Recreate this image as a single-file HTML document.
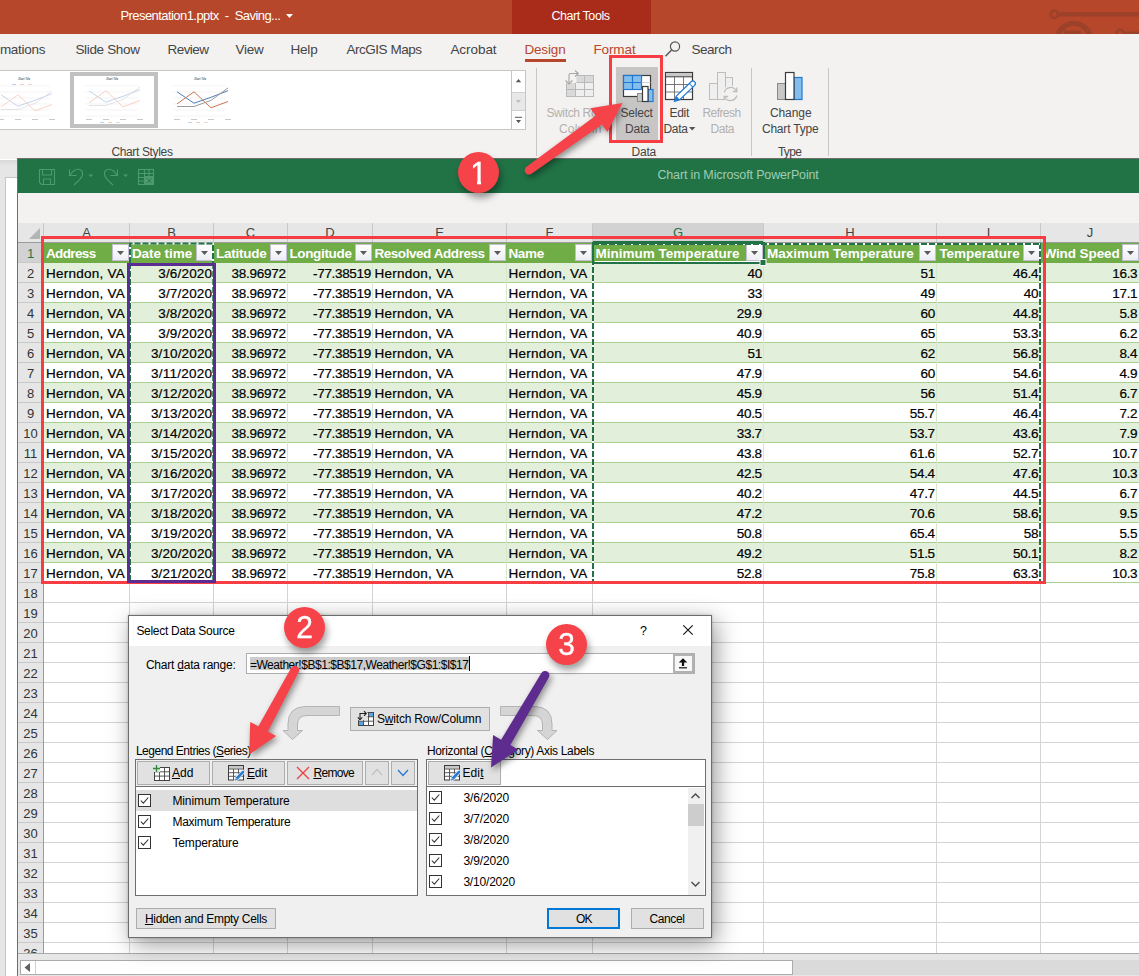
<!DOCTYPE html>
<html><head><meta charset="utf-8"><title>Select Data Source</title>
<style>
html,body{margin:0;padding:0;}
body{width:1139px;height:976px;overflow:hidden;position:relative;background:#fff;font-family:"Liberation Sans",sans-serif;}
.b{position:absolute;box-sizing:border-box;}
.t{position:absolute;white-space:pre;}
svg{position:absolute;overflow:visible;}
u{text-decoration:underline;text-underline-offset:1px;}
</style></head><body>
<div class="b" style="left:0px;top:0px;width:1139px;height:34px;background:#B7472A;"></div>
<div class="b" style="left:512px;top:0px;width:139px;height:34px;background:#A92B1A;"></div>
<div class="b" style="left:0px;top:34px;width:1139px;height:125px;background:#F3F2F1;"></div>
<div class="b" style="left:0px;top:160px;width:18px;height:816px;background:linear-gradient(#D9D9D9,#E6E6E6 6px);"></div>
<div class="b" style="left:5px;top:177px;width:13px;height:800px;background:#fff;border:1px solid #C6C6C6;border-right:none;"></div>
<div class="b" style="left:17px;top:158px;width:1122px;height:818px;background:#fff;border-left:1px solid #6E6E6E;border-top:1px solid #6E6E6E;"></div>
<div class="b" style="left:18px;top:159px;width:1121px;height:34px;background:#217346;"></div>
<div class="b" style="left:18px;top:193px;width:1121px;height:30px;background:#F3F2F1;"></div>
<div class="t" style="left:120.4px;top:6.0px;font-size:13px;line-height:20px;color:#fff;letter-spacing:-0.56px;">Presentation1.pptx  -  Saving...</div>
<svg style="left:286px;top:14px" width="7" height="4"><path d="M0 0 L7 0 L3.5 4 Z" fill="#fff"/></svg>
<div class="t" style="left:551.4px;top:6.0px;font-size:12.5px;line-height:20px;color:#fff;letter-spacing:-0.44px;">Chart Tools</div>
<svg style="left:1040px;top:0px;overflow:hidden" width="99" height="34" viewBox="0 0 99 34">
      <g fill="none" stroke="#9C412A">
        <circle cx="14.3" cy="14.4" r="3.6" stroke-width="2.6"/><path d="M19 14.4 H99" stroke-width="4.2"/>
        <circle cx="33.8" cy="39.9" r="16.5" stroke-width="5.4"/>
        <circle cx="80.2" cy="33.4" r="3.6" stroke-width="2.6"/><path d="M85 33.6 H99" stroke-width="4.2"/>
      </g><rect x="24" y="30.6" width="17" height="4" fill="#9C412A"/></svg>
<div class="t" style="left:-0.1px;top:39.7px;font-size:13.5px;line-height:20px;color:#444;letter-spacing:-0.30px;">mations</div>
<div class="t" style="left:75.4px;top:39.7px;font-size:13.5px;line-height:20px;color:#444;letter-spacing:-0.33px;">Slide Show</div>
<div class="t" style="left:167.4px;top:39.7px;font-size:13.5px;line-height:20px;color:#444;letter-spacing:-0.51px;">Review</div>
<div class="t" style="left:235.4px;top:39.7px;font-size:13.5px;line-height:20px;color:#444;letter-spacing:-0.20px;">View</div>
<div class="t" style="left:290.4px;top:39.7px;font-size:13.5px;line-height:20px;color:#444;letter-spacing:-0.14px;">Help</div>
<div class="t" style="left:346.4px;top:39.7px;font-size:13.5px;line-height:20px;color:#444;letter-spacing:-0.46px;">ArcGIS Maps</div>
<div class="t" style="left:450.4px;top:39.7px;font-size:13.5px;line-height:20px;color:#444;letter-spacing:-0.05px;">Acrobat</div>
<div class="t" style="left:691.4px;top:39.7px;font-size:13.5px;line-height:20px;color:#444;letter-spacing:-0.43px;">Search</div>
<div class="t" style="left:524.4px;top:39.7px;font-size:13.5px;line-height:20px;color:#B7472A;letter-spacing:-0.14px;">Design</div>
<div class="t" style="left:593.4px;top:39.7px;font-size:13.5px;line-height:20px;color:#B7472A;letter-spacing:-0.09px;">Format</div>
<div class="b" style="left:525px;top:59px;width:41px;height:3px;background:#B7472A;"></div>
<svg style="left:664px;top:40px" width="18" height="18" viewBox="0 0 18 18"><circle cx="11" cy="6.5" r="4.6" fill="none" stroke="#555" stroke-width="1.2"/><path d="M7.6 10 L1.5 16.2" stroke="#555" stroke-width="1.4"/></svg>
<div class="b" style="left:-1px;top:70px;width:527px;height:60px;background:#fff;border:1px solid #C6C6C6;"></div>
<div class="b" style="left:511px;top:70px;width:15px;height:60px;background:#fff;border:1px solid #C6C6C6;"></div>
<div class="b" style="left:512px;top:92px;width:13px;height:19px;background:#E8E8E8;border-top:1px solid #D0D0D0;border-bottom:1px solid #D0D0D0;"></div>
<svg style="left:514px;top:77px" width="9" height="48" viewBox="0 0 9 48"><path d="M1.800 5.200 L7.200 5.200 L4.500 2 Z" fill="#555"/><path d="M1.800 23 L7 23 L4.400 26 Z" fill="#BDBDBD"/><path d="M1 40.300 H8" stroke="#555" stroke-width="1"/><path d="M2 43 L7 43 L4.500 46.300 Z" fill="#555"/></svg>
<div class="b" style="left:70px;top:72px;width:88px;height:56px;background:#fff;border:4px solid #C1C1C1;"></div>
<svg style="left:-12px;top:72px" width="70" height="56" viewBox="0 0 70 56"><path d="M9 14 H62" stroke="#EDEDED" stroke-width="0.6"/><path d="M9 20 H62" stroke="#EDEDED" stroke-width="0.6"/><path d="M9 26 H62" stroke="#EDEDED" stroke-width="0.6"/><path d="M9 32 H62" stroke="#EDEDED" stroke-width="0.6"/><path d="M9 38 H62" stroke="#EDEDED" stroke-width="0.6"/><path d="M9 44 H62" stroke="#EDEDED" stroke-width="0.6"/><text x="36" y="7.8" font-size="2.7" text-anchor="middle" fill="#111" font-family="Liberation Sans, sans-serif">Chart Title</text><g fill="none" stroke-width="0.8" stroke-linejoin="round" opacity="0.75" transform="translate(0,4)"><polyline points="13,18.8 30,30.2 47,24.3 64,17.7" stroke="#9DBBE0"/><polyline points="13,30.9 30,18.8 47,34.8 64,28.5" stroke="#F6B8A0"/><polyline points="13,33.5 30,33.5 47,27.4 64,14.9" stroke="#D4D4D4"/></g><path d="M10 47.5 H16" stroke="#BDBDBD" stroke-width="0.8"/><path d="M27 47.5 H33" stroke="#BDBDBD" stroke-width="0.8"/><path d="M44 47.5 H50" stroke="#BDBDBD" stroke-width="0.8"/><path d="M61 47.5 H67" stroke="#BDBDBD" stroke-width="0.8"/><g transform="translate(0,-38.0)"><path d="M24 50.5 H28" stroke="#9DBBE0" stroke-width="0.7"/><path d="M32 50.5 H36" stroke="#F2B9A0" stroke-width="0.7"/><path d="M40 50.5 H44" stroke="#CFCFCF" stroke-width="0.7"/></g></svg>
<svg style="left:76px;top:72px" width="70" height="56" viewBox="0 0 70 56"><path d="M9 14 H62" stroke="#EDEDED" stroke-width="0.6"/><path d="M9 20 H62" stroke="#EDEDED" stroke-width="0.6"/><path d="M9 26 H62" stroke="#EDEDED" stroke-width="0.6"/><path d="M9 32 H62" stroke="#EDEDED" stroke-width="0.6"/><path d="M9 38 H62" stroke="#EDEDED" stroke-width="0.6"/><path d="M9 44 H62" stroke="#EDEDED" stroke-width="0.6"/><text x="36" y="7.8" font-size="2.7" text-anchor="middle" fill="#111" font-family="Liberation Sans, sans-serif">Chart Title</text><g fill="none" stroke-width="0.8" stroke-linejoin="round" opacity="0.8" transform="translate(0,0)"><polyline points="13,18.8 30,30.2 47,24.3 64,17.7" stroke="#9DBBE0"/><polyline points="13,30.9 30,18.8 47,34.8 64,28.5" stroke="#F6B8A0"/><polyline points="13,33.5 30,33.5 47,27.4 64,14.9" stroke="#D4D4D4"/></g><path d="M10 47.5 H16" stroke="#BDBDBD" stroke-width="0.8"/><path d="M27 47.5 H33" stroke="#BDBDBD" stroke-width="0.8"/><path d="M44 47.5 H50" stroke="#BDBDBD" stroke-width="0.8"/><path d="M61 47.5 H67" stroke="#BDBDBD" stroke-width="0.8"/><g transform="translate(0,0.0)"><path d="M24 50.5 H28" stroke="#9DBBE0" stroke-width="0.7"/><path d="M32 50.5 H36" stroke="#F2B9A0" stroke-width="0.7"/><path d="M40 50.5 H44" stroke="#CFCFCF" stroke-width="0.7"/></g></svg>
<svg style="left:164px;top:72px" width="70" height="56" viewBox="0 0 70 56"><path d="M9 14 H62" stroke="#EDEDED" stroke-width="0.6"/><path d="M9 20 H62" stroke="#EDEDED" stroke-width="0.6"/><path d="M9 26 H62" stroke="#EDEDED" stroke-width="0.6"/><path d="M9 32 H62" stroke="#EDEDED" stroke-width="0.6"/><path d="M9 38 H62" stroke="#EDEDED" stroke-width="0.6"/><path d="M9 44 H62" stroke="#EDEDED" stroke-width="0.6"/><text x="36" y="7.8" font-size="2.7" text-anchor="middle" fill="#111" font-family="Liberation Sans, sans-serif">Chart Title</text><g fill="none" stroke-width="1.0" stroke-linejoin="round" opacity="1" transform="translate(0,1)"><polyline points="13,18.8 30,30.2 47,24.3 64,17.7" stroke="#4F7FBF"/><polyline points="13,30.9 30,18.8 47,34.8 64,28.5" stroke="#C9764E"/><polyline points="13,33.5 30,33.5 47,27.4 64,14.9" stroke="#9A9A9A"/></g><path d="M10 47.5 H16" stroke="#BDBDBD" stroke-width="0.8"/><path d="M27 47.5 H33" stroke="#BDBDBD" stroke-width="0.8"/><path d="M44 47.5 H50" stroke="#BDBDBD" stroke-width="0.8"/><path d="M61 47.5 H67" stroke="#BDBDBD" stroke-width="0.8"/><g transform="translate(0,0.0)"><path d="M24 50.5 H28" stroke="#9DBBE0" stroke-width="0.7"/><path d="M32 50.5 H36" stroke="#F2B9A0" stroke-width="0.7"/><path d="M40 50.5 H44" stroke="#CFCFCF" stroke-width="0.7"/></g></svg>
<div class="t" style="left:111.4px;top:142.0px;font-size:12px;line-height:20px;color:#444;letter-spacing:-0.35px;">Chart Styles</div>
<div class="b" style="left:536px;top:68px;width:1px;height:88px;background:#C8C6C4;"></div>
<div class="b" style="left:751px;top:68px;width:1px;height:88px;background:#C8C6C4;"></div>
<div class="b" style="left:828px;top:68px;width:1px;height:88px;background:#C8C6C4;"></div>
<svg style="left:562px;top:70px" width="34" height="30" viewBox="0 0 34 30">
      <g stroke="#B9B9B9" stroke-width="1" fill="none">
      <rect x="4.5" y="5.5" width="27" height="21" fill="#EFEFEF"/>
      <rect x="13.5" y="5.5" width="18" height="7" fill="#D9D9D9"/><rect x="4.5" y="12.5" width="9" height="14" fill="#D9D9D9"/>
      <path d="M13.5 5.5 V26.5 M22.5 5.5 V26.5 M4.5 12.5 H31.5 M4.5 19.5 H31.5"/>
      </g>
      <rect x="2" y="1" width="12.5" height="12" fill="#F3F2F1"/>
      <g stroke="#A6A6A6" stroke-width="1.1" fill="none"><path d="M7 14 V5 Q7 3.5 8.5 3.5 H16"/><path d="M3.6 10.5 L7 14 L10.4 10.5"/><path d="M13 0.5 L16.4 3.5 L13 6.5"/></g></svg>
<div class="t" style="left:546.4px;top:103.0px;font-size:12px;line-height:20px;color:#B3B0AD;letter-spacing:-0.35px;">Switch Row/</div>
<div class="t" style="left:558.9px;top:118.5px;font-size:12px;line-height:20px;color:#B3B0AD;letter-spacing:0.22px;">Column</div>
<div class="b" style="left:616px;top:67px;width:42px;height:73px;background:#C8C6C4;"></div>
<svg style="left:620px;top:72px" width="36" height="32" viewBox="0 0 36 32">
      <rect x="3.5" y="3.5" width="27" height="21" fill="#fff" stroke="#3B3B3B" stroke-width="1.2"/>
      <rect x="3.5" y="3.5" width="18" height="14" fill="#83BEEC" stroke="#1E78D2" stroke-width="1.2"/>
      <path d="M12.5 3.5 V17.5 M3.5 10.5 H21.5" stroke="#1E78D2" stroke-width="1.2"/>
      <path d="M21.5 10.5 H30.5 M21.5 17.5 H30.5" stroke="#C8C8C8" stroke-width="0.8"/>
      <rect x="17.5" y="21.5" width="5.5" height="8" fill="#C8C8C8" stroke="#8A8A8A" stroke-width="1"/>
      <rect x="28" y="17.5" width="5" height="12" fill="#83BEEC" stroke="#1E78D2" stroke-width="1.2"/>
      <rect x="22.5" y="14.5" width="5.5" height="15" fill="#fff" stroke="#3B3B3B" stroke-width="1.2"/>
      </svg>
<div class="t" style="left:620.4px;top:103.0px;font-size:12px;line-height:20px;color:#444;letter-spacing:-0.19px;">Select</div>
<div class="t" style="left:624.9px;top:118.5px;font-size:12px;line-height:20px;color:#444;letter-spacing:-0.16px;">Data</div>
<svg style="left:662px;top:69px" width="38" height="36" viewBox="0 0 38 36">
      <rect x="3.5" y="3.5" width="27" height="27" fill="#fff" stroke="#3B3B3B" stroke-width="1.2"/>
      <rect x="4" y="4" width="26" height="3.6" fill="#C8C8C8"/>
      <path d="M3.5 7.8 H30.5" stroke="#3B3B3B" stroke-width="1"/>
      <path d="M12.5 8 V30 M21.5 8 V30 M4 15.5 H30 M4 23 H30" stroke="#6A6A6A" stroke-width="0.9"/>
      <g transform="translate(12.5,32.3) rotate(-44)"><path d="M0 0 L5 -2.500 H25.500 Q28 -2.500 28 0 Q28 2.500 25.500 2.500 H5 Z" fill="#fff" stroke="#1E78D2" stroke-width="1.200"/><path d="M0 0 L5 -2.500 V2.500 Z" fill="#1E78D2"/><path d="M23 -2.500 V2.500" stroke="#1E78D2" stroke-width="1"/></g>
      </svg>
<div class="t" style="left:669.4px;top:103.0px;font-size:12px;line-height:20px;color:#444;letter-spacing:-0.24px;">Edit</div>
<div class="t" style="left:663.4px;top:118.5px;font-size:12px;line-height:20px;color:#444;letter-spacing:-0.29px;">Data</div>
<svg style="left:689px;top:127px" width="7" height="4"><path d="M0 0 L6.4 0 L3.2 3.6 Z" fill="#555"/></svg>
<svg style="left:706px;top:69px" width="32" height="36" viewBox="0 0 32 36">
      <g fill="#EFEFEF" stroke="#BDBDBD" stroke-width="1">
      <rect x="19.5" y="8.5" width="7" height="14"/><rect x="3.5" y="14.5" width="8" height="16"/><rect x="11.5" y="3.5" width="8" height="27"/></g>
      <circle cx="24.5" cy="25" r="8.6" fill="#F3F2F1"/>
      <g fill="none" stroke="#BDBDBD" stroke-width="1.3"><path d="M18.2 23.5 A6.5 6.5 0 0 1 30.3 22"/><path d="M30.8 26.5 A6.5 6.5 0 0 1 18.7 28"/><path d="M30.8 18.5 V22.5 H26.8"/><path d="M18.2 31.5 V27.5 H22.2"/></g></svg>
<div class="t" style="left:702.4px;top:103.0px;font-size:12px;line-height:20px;color:#B3B0AD;letter-spacing:-0.55px;">Refresh</div>
<div class="t" style="left:710.4px;top:118.5px;font-size:12px;line-height:20px;color:#B3B0AD;letter-spacing:-0.41px;">Data</div>
<div class="t" style="left:631.4px;top:142.0px;font-size:12px;line-height:20px;color:#444;letter-spacing:-0.16px;">Data</div>
<svg style="left:774px;top:69px" width="32" height="34" viewBox="0 0 32 34">
      <rect x="3.5" y="14.5" width="8.5" height="16" fill="#C8C8C8" stroke="#8A8A8A" stroke-width="1"/>
      <rect x="20" y="8.5" width="8" height="22" fill="#83BEEC" stroke="#1E78D2" stroke-width="1.2"/>
      <rect x="11.5" y="3.5" width="8.5" height="27" fill="#fff" stroke="#3B3B3B" stroke-width="1.2"/></svg>
<div class="t" style="left:769.9px;top:103.0px;font-size:12px;line-height:20px;color:#444;letter-spacing:-0.06px;">Change</div>
<div class="t" style="left:761.9px;top:118.5px;font-size:12px;line-height:20px;color:#444;letter-spacing:-0.18px;">Chart Type</div>
<div class="t" style="left:777.9px;top:142.0px;font-size:12px;line-height:20px;color:#444;letter-spacing:-0.70px;">Type</div>
<div class="b" style="left:609px;top:55px;width:54px;height:88px;border:3px solid #F63D44;"></div>
<div class="t" style="left:657.4px;top:165.0px;font-size:12.5px;line-height:20px;color:#9FCDB3;letter-spacing:-0.14px;">Chart in Microsoft PowerPoint</div>
<svg style="left:0;top:0" width="200" height="200" viewBox="0 0 200 200">
      <g fill="none" stroke="#4E9A70" stroke-width="1.1">
      <path d="M39.5 169.5 H54.5 V184.5 H41.5 L39.5 182.5 Z"/><path d="M42.5 169.5 V175 H51.5 V169.5"/><path d="M43.5 184.5 V179 H50.5 V184.5"/>
      <path d="M69.5 169.5 V175.5 H76.5"/><path d="M69.8 175.3 Q74 169 78.5 169.3 Q83 170 82.6 174.6 Q82 178 74 185"/>
      <path d="M117.5 169.5 V175.5 H110.5"/><path d="M117.2 175.3 Q113 169 108.5 169.3 Q104 170 104.4 174.6 Q105 178 113 185"/>
      <rect x="138.5" y="169.500" width="15" height="15"/><path d="M138.500 173.500 H153.500 M138.500 177.500 H144.500 M138.500 181 H144.500 M144.500 169.500 V184.500 M149 169.500 V176"/>
      </g>
      <path d="M88.400 174.400 L93.200 174.400 L90.800 176.900 Z" fill="#4E9A70"/><path d="M123.200 174.400 L128 174.400 L125.600 176.900 Z" fill="#4E9A70"/>
      <rect x="144.500" y="176" width="9.500" height="9" fill="#4E9A70"/><path d="M147 178.300 L151.500 183 M151.500 178.300 L147 183" stroke="#217346" stroke-width="0.900"/>
      </svg>
<div class="b" style="left:18px;top:223px;width:1121px;height:20px;background:#E6E6E6;border-bottom:1px solid #9B9B9B;"></div>
<div class="b" style="left:18px;top:243px;width:26px;height:710px;background:#E6E6E6;border-right:1px solid #9B9B9B;"></div>
<div class="b" style="left:593px;top:223px;width:171px;height:20px;background:#D2D2D2;border-bottom:2px solid #217346;"></div>
<div class="b" style="left:18px;top:243px;width:25px;height:20px;background:#D2D2D2;"></div>
<svg style="left:18px;top:223px" width="26" height="20"><path d="M22 5 L22 16 L11 16 Z" fill="#B4B4B4"/></svg>
<div class="t" style="left:82.2px;top:222.5px;font-size:13px;line-height:20px;color:#444;letter-spacing:-0.00px;">A</div>
<div class="t" style="left:167.2px;top:222.5px;font-size:13px;line-height:20px;color:#444;letter-spacing:0.00px;">B</div>
<div class="t" style="left:245.8px;top:222.5px;font-size:13px;line-height:20px;color:#444;letter-spacing:0.00px;">C</div>
<div class="t" style="left:325.3px;top:222.5px;font-size:13px;line-height:20px;color:#444;letter-spacing:0.00px;">D</div>
<div class="t" style="left:435.2px;top:222.5px;font-size:13px;line-height:20px;color:#444;letter-spacing:0.00px;">E</div>
<div class="t" style="left:545.5px;top:222.5px;font-size:13px;line-height:20px;color:#444;letter-spacing:0.00px;">F</div>
<div class="t" style="left:672.9px;top:222.5px;font-size:13px;line-height:20px;color:#217346;letter-spacing:-0.00px;">G</div>
<div class="t" style="left:845.3px;top:222.5px;font-size:13px;line-height:20px;color:#444;letter-spacing:0.00px;">H</div>
<div class="t" style="left:986.7px;top:222.5px;font-size:13px;line-height:20px;color:#444;letter-spacing:-0.00px;">I</div>
<div class="t" style="left:1086.8px;top:222.5px;font-size:13px;line-height:20px;color:#444;letter-spacing:0.00px;">J</div>
<div class="b" style="left:43px;top:223px;width:1px;height:19px;background:#C8C8C8;"></div>
<div class="b" style="left:129px;top:223px;width:1px;height:19px;background:#C8C8C8;"></div>
<div class="b" style="left:213px;top:223px;width:1px;height:19px;background:#C8C8C8;"></div>
<div class="b" style="left:287px;top:223px;width:1px;height:19px;background:#C8C8C8;"></div>
<div class="b" style="left:372px;top:223px;width:1px;height:19px;background:#C8C8C8;"></div>
<div class="b" style="left:506px;top:223px;width:1px;height:19px;background:#C8C8C8;"></div>
<div class="b" style="left:592px;top:223px;width:1px;height:19px;background:#C8C8C8;"></div>
<div class="b" style="left:763px;top:223px;width:1px;height:19px;background:#C8C8C8;"></div>
<div class="b" style="left:936px;top:223px;width:1px;height:19px;background:#C8C8C8;"></div>
<div class="b" style="left:1040px;top:223px;width:1px;height:19px;background:#C8C8C8;"></div>
<div class="b" style="left:44px;top:243px;width:1095px;height:20px;background:#70AD47;"></div>
<div class="b" style="left:44px;top:263px;width:1095px;height:20px;background:#E2EFDA;border-bottom:1px solid #A9D08E;"></div>
<div class="b" style="left:44px;top:283px;width:1095px;height:20px;background:#fff;border-bottom:1px solid #A9D08E;"></div>
<div class="b" style="left:44px;top:303px;width:1095px;height:20px;background:#E2EFDA;border-bottom:1px solid #A9D08E;"></div>
<div class="b" style="left:44px;top:323px;width:1095px;height:20px;background:#fff;border-bottom:1px solid #A9D08E;"></div>
<div class="b" style="left:44px;top:343px;width:1095px;height:20px;background:#E2EFDA;border-bottom:1px solid #A9D08E;"></div>
<div class="b" style="left:44px;top:363px;width:1095px;height:20px;background:#fff;border-bottom:1px solid #A9D08E;"></div>
<div class="b" style="left:44px;top:383px;width:1095px;height:20px;background:#E2EFDA;border-bottom:1px solid #A9D08E;"></div>
<div class="b" style="left:44px;top:403px;width:1095px;height:20px;background:#fff;border-bottom:1px solid #A9D08E;"></div>
<div class="b" style="left:44px;top:423px;width:1095px;height:20px;background:#E2EFDA;border-bottom:1px solid #A9D08E;"></div>
<div class="b" style="left:44px;top:443px;width:1095px;height:20px;background:#fff;border-bottom:1px solid #A9D08E;"></div>
<div class="b" style="left:44px;top:463px;width:1095px;height:20px;background:#E2EFDA;border-bottom:1px solid #A9D08E;"></div>
<div class="b" style="left:44px;top:483px;width:1095px;height:20px;background:#fff;border-bottom:1px solid #A9D08E;"></div>
<div class="b" style="left:44px;top:503px;width:1095px;height:20px;background:#E2EFDA;border-bottom:1px solid #A9D08E;"></div>
<div class="b" style="left:44px;top:523px;width:1095px;height:20px;background:#fff;border-bottom:1px solid #A9D08E;"></div>
<div class="b" style="left:44px;top:543px;width:1095px;height:20px;background:#E2EFDA;border-bottom:1px solid #A9D08E;"></div>
<div class="b" style="left:44px;top:563px;width:1095px;height:20px;background:#fff;border-bottom:1px solid #A9D08E;"></div>
<div class="b" style="left:44px;top:602px;width:1095px;height:1px;background:#D4D4D4;"></div>
<div class="b" style="left:44px;top:622px;width:1095px;height:1px;background:#D4D4D4;"></div>
<div class="b" style="left:44px;top:642px;width:1095px;height:1px;background:#D4D4D4;"></div>
<div class="b" style="left:44px;top:662px;width:1095px;height:1px;background:#D4D4D4;"></div>
<div class="b" style="left:44px;top:682px;width:1095px;height:1px;background:#D4D4D4;"></div>
<div class="b" style="left:44px;top:702px;width:1095px;height:1px;background:#D4D4D4;"></div>
<div class="b" style="left:44px;top:722px;width:1095px;height:1px;background:#D4D4D4;"></div>
<div class="b" style="left:44px;top:742px;width:1095px;height:1px;background:#D4D4D4;"></div>
<div class="b" style="left:44px;top:762px;width:1095px;height:1px;background:#D4D4D4;"></div>
<div class="b" style="left:44px;top:782px;width:1095px;height:1px;background:#D4D4D4;"></div>
<div class="b" style="left:44px;top:802px;width:1095px;height:1px;background:#D4D4D4;"></div>
<div class="b" style="left:44px;top:822px;width:1095px;height:1px;background:#D4D4D4;"></div>
<div class="b" style="left:44px;top:842px;width:1095px;height:1px;background:#D4D4D4;"></div>
<div class="b" style="left:44px;top:862px;width:1095px;height:1px;background:#D4D4D4;"></div>
<div class="b" style="left:44px;top:882px;width:1095px;height:1px;background:#D4D4D4;"></div>
<div class="b" style="left:44px;top:902px;width:1095px;height:1px;background:#D4D4D4;"></div>
<div class="b" style="left:44px;top:922px;width:1095px;height:1px;background:#D4D4D4;"></div>
<div class="b" style="left:44px;top:942px;width:1095px;height:1px;background:#D4D4D4;"></div>
<div class="b" style="left:129px;top:583px;width:1px;height:370px;background:#D4D4D4;"></div>
<div class="b" style="left:213px;top:583px;width:1px;height:370px;background:#D4D4D4;"></div>
<div class="b" style="left:287px;top:583px;width:1px;height:370px;background:#D4D4D4;"></div>
<div class="b" style="left:372px;top:583px;width:1px;height:370px;background:#D4D4D4;"></div>
<div class="b" style="left:506px;top:583px;width:1px;height:370px;background:#D4D4D4;"></div>
<div class="b" style="left:592px;top:583px;width:1px;height:370px;background:#D4D4D4;"></div>
<div class="b" style="left:763px;top:583px;width:1px;height:370px;background:#D4D4D4;"></div>
<div class="b" style="left:936px;top:583px;width:1px;height:370px;background:#D4D4D4;"></div>
<div class="b" style="left:1040px;top:583px;width:1px;height:370px;background:#D4D4D4;"></div>
<div class="b" style="left:129px;top:263px;width:1px;height:320px;background:#D6E8CB;"></div>
<div class="b" style="left:213px;top:263px;width:1px;height:320px;background:#D6E8CB;"></div>
<div class="b" style="left:287px;top:263px;width:1px;height:320px;background:#D6E8CB;"></div>
<div class="b" style="left:372px;top:263px;width:1px;height:320px;background:#D6E8CB;"></div>
<div class="b" style="left:506px;top:263px;width:1px;height:320px;background:#D6E8CB;"></div>
<div class="b" style="left:592px;top:263px;width:1px;height:320px;background:#D6E8CB;"></div>
<div class="b" style="left:763px;top:263px;width:1px;height:320px;background:#D6E8CB;"></div>
<div class="b" style="left:936px;top:263px;width:1px;height:320px;background:#D6E8CB;"></div>
<div class="b" style="left:1040px;top:263px;width:1px;height:320px;background:#D6E8CB;"></div>
<div class="t" style="left:26.9px;top:243.5px;font-size:13px;line-height:20px;color:#217346;letter-spacing:-0.00px;">1</div>
<div class="b" style="left:18px;top:262px;width:25px;height:1px;background:#C8C8C8;"></div>
<div class="t" style="left:26.9px;top:263.5px;font-size:13px;line-height:20px;color:#333;letter-spacing:-0.00px;">2</div>
<div class="b" style="left:18px;top:282px;width:25px;height:1px;background:#C8C8C8;"></div>
<div class="t" style="left:26.9px;top:283.5px;font-size:13px;line-height:20px;color:#333;letter-spacing:-0.00px;">3</div>
<div class="b" style="left:18px;top:302px;width:25px;height:1px;background:#C8C8C8;"></div>
<div class="t" style="left:26.9px;top:303.5px;font-size:13px;line-height:20px;color:#333;letter-spacing:-0.00px;">4</div>
<div class="b" style="left:18px;top:322px;width:25px;height:1px;background:#C8C8C8;"></div>
<div class="t" style="left:26.9px;top:323.5px;font-size:13px;line-height:20px;color:#333;letter-spacing:-0.00px;">5</div>
<div class="b" style="left:18px;top:342px;width:25px;height:1px;background:#C8C8C8;"></div>
<div class="t" style="left:26.9px;top:343.5px;font-size:13px;line-height:20px;color:#333;letter-spacing:-0.00px;">6</div>
<div class="b" style="left:18px;top:362px;width:25px;height:1px;background:#C8C8C8;"></div>
<div class="t" style="left:26.9px;top:363.5px;font-size:13px;line-height:20px;color:#333;letter-spacing:-0.00px;">7</div>
<div class="b" style="left:18px;top:382px;width:25px;height:1px;background:#C8C8C8;"></div>
<div class="t" style="left:26.9px;top:383.5px;font-size:13px;line-height:20px;color:#333;letter-spacing:-0.00px;">8</div>
<div class="b" style="left:18px;top:402px;width:25px;height:1px;background:#C8C8C8;"></div>
<div class="t" style="left:26.9px;top:403.5px;font-size:13px;line-height:20px;color:#333;letter-spacing:-0.00px;">9</div>
<div class="b" style="left:18px;top:422px;width:25px;height:1px;background:#C8C8C8;"></div>
<div class="t" style="left:23.3px;top:423.5px;font-size:13px;line-height:20px;color:#333;letter-spacing:0.00px;">10</div>
<div class="b" style="left:18px;top:442px;width:25px;height:1px;background:#C8C8C8;"></div>
<div class="t" style="left:23.8px;top:443.5px;font-size:13px;line-height:20px;color:#333;letter-spacing:0.00px;">11</div>
<div class="b" style="left:18px;top:462px;width:25px;height:1px;background:#C8C8C8;"></div>
<div class="t" style="left:23.3px;top:463.5px;font-size:13px;line-height:20px;color:#333;letter-spacing:0.00px;">12</div>
<div class="b" style="left:18px;top:482px;width:25px;height:1px;background:#C8C8C8;"></div>
<div class="t" style="left:23.3px;top:483.5px;font-size:13px;line-height:20px;color:#333;letter-spacing:0.00px;">13</div>
<div class="b" style="left:18px;top:502px;width:25px;height:1px;background:#C8C8C8;"></div>
<div class="t" style="left:23.3px;top:503.5px;font-size:13px;line-height:20px;color:#333;letter-spacing:0.00px;">14</div>
<div class="b" style="left:18px;top:522px;width:25px;height:1px;background:#C8C8C8;"></div>
<div class="t" style="left:23.3px;top:523.5px;font-size:13px;line-height:20px;color:#333;letter-spacing:0.00px;">15</div>
<div class="b" style="left:18px;top:542px;width:25px;height:1px;background:#C8C8C8;"></div>
<div class="t" style="left:23.3px;top:543.5px;font-size:13px;line-height:20px;color:#333;letter-spacing:0.00px;">16</div>
<div class="b" style="left:18px;top:562px;width:25px;height:1px;background:#C8C8C8;"></div>
<div class="t" style="left:23.3px;top:563.5px;font-size:13px;line-height:20px;color:#333;letter-spacing:0.00px;">17</div>
<div class="b" style="left:18px;top:582px;width:25px;height:1px;background:#C8C8C8;"></div>
<div class="t" style="left:23.3px;top:583.5px;font-size:13px;line-height:20px;color:#333;letter-spacing:0.00px;">18</div>
<div class="b" style="left:18px;top:602px;width:25px;height:1px;background:#C8C8C8;"></div>
<div class="t" style="left:23.3px;top:603.5px;font-size:13px;line-height:20px;color:#333;letter-spacing:0.00px;">19</div>
<div class="b" style="left:18px;top:622px;width:25px;height:1px;background:#C8C8C8;"></div>
<div class="t" style="left:23.3px;top:623.5px;font-size:13px;line-height:20px;color:#333;letter-spacing:0.00px;">20</div>
<div class="b" style="left:18px;top:642px;width:25px;height:1px;background:#C8C8C8;"></div>
<div class="t" style="left:23.3px;top:643.5px;font-size:13px;line-height:20px;color:#333;letter-spacing:0.00px;">21</div>
<div class="b" style="left:18px;top:662px;width:25px;height:1px;background:#C8C8C8;"></div>
<div class="t" style="left:23.3px;top:663.5px;font-size:13px;line-height:20px;color:#333;letter-spacing:0.00px;">22</div>
<div class="b" style="left:18px;top:682px;width:25px;height:1px;background:#C8C8C8;"></div>
<div class="t" style="left:23.3px;top:683.5px;font-size:13px;line-height:20px;color:#333;letter-spacing:0.00px;">23</div>
<div class="b" style="left:18px;top:702px;width:25px;height:1px;background:#C8C8C8;"></div>
<div class="t" style="left:23.3px;top:703.5px;font-size:13px;line-height:20px;color:#333;letter-spacing:0.00px;">24</div>
<div class="b" style="left:18px;top:722px;width:25px;height:1px;background:#C8C8C8;"></div>
<div class="t" style="left:23.3px;top:723.5px;font-size:13px;line-height:20px;color:#333;letter-spacing:0.00px;">25</div>
<div class="b" style="left:18px;top:742px;width:25px;height:1px;background:#C8C8C8;"></div>
<div class="t" style="left:23.3px;top:743.5px;font-size:13px;line-height:20px;color:#333;letter-spacing:0.00px;">26</div>
<div class="b" style="left:18px;top:762px;width:25px;height:1px;background:#C8C8C8;"></div>
<div class="t" style="left:23.3px;top:763.5px;font-size:13px;line-height:20px;color:#333;letter-spacing:0.00px;">27</div>
<div class="b" style="left:18px;top:782px;width:25px;height:1px;background:#C8C8C8;"></div>
<div class="t" style="left:23.3px;top:783.5px;font-size:13px;line-height:20px;color:#333;letter-spacing:0.00px;">28</div>
<div class="b" style="left:18px;top:802px;width:25px;height:1px;background:#C8C8C8;"></div>
<div class="t" style="left:23.3px;top:803.5px;font-size:13px;line-height:20px;color:#333;letter-spacing:0.00px;">29</div>
<div class="b" style="left:18px;top:822px;width:25px;height:1px;background:#C8C8C8;"></div>
<div class="t" style="left:23.3px;top:823.5px;font-size:13px;line-height:20px;color:#333;letter-spacing:0.00px;">30</div>
<div class="b" style="left:18px;top:842px;width:25px;height:1px;background:#C8C8C8;"></div>
<div class="t" style="left:23.3px;top:843.5px;font-size:13px;line-height:20px;color:#333;letter-spacing:0.00px;">31</div>
<div class="b" style="left:18px;top:862px;width:25px;height:1px;background:#C8C8C8;"></div>
<div class="t" style="left:23.3px;top:863.5px;font-size:13px;line-height:20px;color:#333;letter-spacing:0.00px;">32</div>
<div class="b" style="left:18px;top:882px;width:25px;height:1px;background:#C8C8C8;"></div>
<div class="t" style="left:23.3px;top:883.5px;font-size:13px;line-height:20px;color:#333;letter-spacing:0.00px;">33</div>
<div class="b" style="left:18px;top:902px;width:25px;height:1px;background:#C8C8C8;"></div>
<div class="t" style="left:23.3px;top:903.5px;font-size:13px;line-height:20px;color:#333;letter-spacing:0.00px;">34</div>
<div class="b" style="left:18px;top:922px;width:25px;height:1px;background:#C8C8C8;"></div>
<div class="t" style="left:23.3px;top:923.5px;font-size:13px;line-height:20px;color:#333;letter-spacing:0.00px;">35</div>
<div class="b" style="left:18px;top:942px;width:25px;height:1px;background:#C8C8C8;"></div>
<div class="t" style="left:23.3px;top:943.5px;font-size:13px;line-height:20px;color:#333;letter-spacing:0.00px;">36</div>
<div class="b" style="left:18px;top:962px;width:25px;height:1px;background:#C8C8C8;"></div>
<div class="t" style="left:45.9px;top:243.5px;font-size:13.5px;line-height:20px;color:#fff;letter-spacing:-0.62px;font-weight:bold;">Address</div>
<div class="b" style="left:112px;top:244px;width:17px;height:17px;background:linear-gradient(#fff,#ECEEF4);border:1px solid #C2BDD2;"></div>
<svg style="left:117px;top:251px" width="7" height="4"><path d="M0 0 L7 0 L3.5 4 Z" fill="#5A5A5A"/></svg>
<div class="t" style="left:131.9px;top:243.5px;font-size:13.5px;line-height:20px;color:#fff;letter-spacing:-0.06px;font-weight:bold;">Date time</div>
<div class="b" style="left:196px;top:244px;width:17px;height:17px;background:linear-gradient(#fff,#ECEEF4);border:1px solid #C2BDD2;"></div>
<svg style="left:201px;top:251px" width="7" height="4"><path d="M0 0 L7 0 L3.5 4 Z" fill="#5A5A5A"/></svg>
<div class="t" style="left:215.9px;top:243.5px;font-size:13.5px;line-height:20px;color:#fff;letter-spacing:-0.22px;font-weight:bold;">Latitude</div>
<div class="b" style="left:270px;top:244px;width:17px;height:17px;background:linear-gradient(#fff,#ECEEF4);border:1px solid #C2BDD2;"></div>
<svg style="left:275px;top:251px" width="7" height="4"><path d="M0 0 L7 0 L3.5 4 Z" fill="#5A5A5A"/></svg>
<div class="t" style="left:289.4px;top:243.5px;font-size:13.5px;line-height:20px;color:#fff;letter-spacing:-0.34px;font-weight:bold;">Longitude</div>
<div class="b" style="left:355px;top:244px;width:17px;height:17px;background:linear-gradient(#fff,#ECEEF4);border:1px solid #C2BDD2;"></div>
<svg style="left:360px;top:251px" width="7" height="4"><path d="M0 0 L7 0 L3.5 4 Z" fill="#5A5A5A"/></svg>
<div class="t" style="left:374.4px;top:243.5px;font-size:13.5px;line-height:20px;color:#fff;letter-spacing:-0.44px;font-weight:bold;">Resolved Address</div>
<div class="b" style="left:489px;top:244px;width:17px;height:17px;background:linear-gradient(#fff,#ECEEF4);border:1px solid #C2BDD2;"></div>
<svg style="left:494px;top:251px" width="7" height="4"><path d="M0 0 L7 0 L3.5 4 Z" fill="#5A5A5A"/></svg>
<div class="t" style="left:508.4px;top:243.5px;font-size:13.5px;line-height:20px;color:#fff;letter-spacing:-0.27px;font-weight:bold;">Name</div>
<div class="b" style="left:575px;top:244px;width:17px;height:17px;background:linear-gradient(#fff,#ECEEF4);border:1px solid #C2BDD2;"></div>
<svg style="left:580px;top:251px" width="7" height="4"><path d="M0 0 L7 0 L3.5 4 Z" fill="#5A5A5A"/></svg>
<div class="t" style="left:595.4px;top:243.5px;font-size:13.5px;line-height:20px;color:#fff;letter-spacing:0.02px;font-weight:bold;">Minimum Temperature</div>
<div class="b" style="left:746px;top:244px;width:17px;height:17px;background:linear-gradient(#fff,#ECEEF4);border:1px solid #C2BDD2;"></div>
<svg style="left:751px;top:251px" width="7" height="4"><path d="M0 0 L7 0 L3.5 4 Z" fill="#5A5A5A"/></svg>
<div class="t" style="left:766.9px;top:243.5px;font-size:13.5px;line-height:20px;color:#fff;letter-spacing:-0.00px;font-weight:bold;">Maximum Temperature</div>
<div class="b" style="left:919px;top:244px;width:17px;height:17px;background:linear-gradient(#fff,#ECEEF4);border:1px solid #C2BDD2;"></div>
<svg style="left:924px;top:251px" width="7" height="4"><path d="M0 0 L7 0 L3.5 4 Z" fill="#5A5A5A"/></svg>
<div class="t" style="left:939.4px;top:243.5px;font-size:13.5px;line-height:20px;color:#fff;letter-spacing:-0.05px;font-weight:bold;">Temperature</div>
<div class="b" style="left:1023px;top:244px;width:17px;height:17px;background:linear-gradient(#fff,#ECEEF4);border:1px solid #C2BDD2;"></div>
<svg style="left:1028px;top:251px" width="7" height="4"><path d="M0 0 L7 0 L3.5 4 Z" fill="#5A5A5A"/></svg>
<div class="t" style="left:1043.4px;top:243.5px;font-size:13.5px;line-height:20px;color:#fff;letter-spacing:-0.09px;font-weight:bold;">Wind Speed</div>
<div class="b" style="left:1122px;top:244px;width:17px;height:17px;background:linear-gradient(#fff,#ECEEF4);border:1px solid #C2BDD2;"></div>
<svg style="left:1127px;top:251px" width="7" height="4"><path d="M0 0 L7 0 L3.5 4 Z" fill="#5A5A5A"/></svg>
<div class="t" style="left:46.0px;top:263.5px;font-size:13.5px;line-height:20px;color:#000;letter-spacing:0.25px;-webkit-text-stroke:0.2px #000;">Herndon, VA</div>
<div class="t" style="left:158.2px;top:263.5px;font-size:13.5px;line-height:20px;color:#000;letter-spacing:0.19px;-webkit-text-stroke:0.2px #000;">3/6/2020</div>
<div class="t" style="left:231.6px;top:263.5px;font-size:13.5px;line-height:20px;color:#000;letter-spacing:-0.27px;-webkit-text-stroke:0.2px #000;">38.96972</div>
<div class="t" style="left:313.1px;top:263.5px;font-size:13.5px;line-height:20px;color:#000;letter-spacing:-0.34px;-webkit-text-stroke:0.2px #000;">-77.38519</div>
<div class="t" style="left:374.5px;top:263.5px;font-size:13.5px;line-height:20px;color:#000;letter-spacing:0.25px;-webkit-text-stroke:0.2px #000;">Herndon, VA</div>
<div class="t" style="left:508.5px;top:263.5px;font-size:13.5px;line-height:20px;color:#000;letter-spacing:0.25px;-webkit-text-stroke:0.2px #000;">Herndon, VA</div>
<div class="t" style="left:747.5px;top:263.5px;font-size:13.5px;line-height:20px;color:#000;letter-spacing:-0.36px;-webkit-text-stroke:0.2px #000;">40</div>
<div class="t" style="left:920.5px;top:263.5px;font-size:13.5px;line-height:20px;color:#000;letter-spacing:-0.36px;-webkit-text-stroke:0.2px #000;">51</div>
<div class="t" style="left:1013.0px;top:263.5px;font-size:13.5px;line-height:20px;color:#000;letter-spacing:-0.28px;-webkit-text-stroke:0.2px #000;">46.4</div>
<div class="t" style="left:1112.2px;top:263.5px;font-size:13.5px;line-height:20px;color:#000;letter-spacing:-0.28px;-webkit-text-stroke:0.2px #000;">16.3</div>
<div class="t" style="left:46.0px;top:283.5px;font-size:13.5px;line-height:20px;color:#000;letter-spacing:0.25px;-webkit-text-stroke:0.2px #000;">Herndon, VA</div>
<div class="t" style="left:158.2px;top:283.5px;font-size:13.5px;line-height:20px;color:#000;letter-spacing:0.19px;-webkit-text-stroke:0.2px #000;">3/7/2020</div>
<div class="t" style="left:231.6px;top:283.5px;font-size:13.5px;line-height:20px;color:#000;letter-spacing:-0.27px;-webkit-text-stroke:0.2px #000;">38.96972</div>
<div class="t" style="left:313.1px;top:283.5px;font-size:13.5px;line-height:20px;color:#000;letter-spacing:-0.34px;-webkit-text-stroke:0.2px #000;">-77.38519</div>
<div class="t" style="left:374.5px;top:283.5px;font-size:13.5px;line-height:20px;color:#000;letter-spacing:0.25px;-webkit-text-stroke:0.2px #000;">Herndon, VA</div>
<div class="t" style="left:508.5px;top:283.5px;font-size:13.5px;line-height:20px;color:#000;letter-spacing:0.25px;-webkit-text-stroke:0.2px #000;">Herndon, VA</div>
<div class="t" style="left:747.5px;top:283.5px;font-size:13.5px;line-height:20px;color:#000;letter-spacing:-0.36px;-webkit-text-stroke:0.2px #000;">33</div>
<div class="t" style="left:920.5px;top:283.5px;font-size:13.5px;line-height:20px;color:#000;letter-spacing:-0.36px;-webkit-text-stroke:0.2px #000;">49</div>
<div class="t" style="left:1023.8px;top:283.5px;font-size:13.5px;line-height:20px;color:#000;letter-spacing:-0.36px;-webkit-text-stroke:0.2px #000;">40</div>
<div class="t" style="left:1112.2px;top:283.5px;font-size:13.5px;line-height:20px;color:#000;letter-spacing:-0.28px;-webkit-text-stroke:0.2px #000;">17.1</div>
<div class="t" style="left:46.0px;top:303.5px;font-size:13.5px;line-height:20px;color:#000;letter-spacing:0.25px;-webkit-text-stroke:0.2px #000;">Herndon, VA</div>
<div class="t" style="left:158.2px;top:303.5px;font-size:13.5px;line-height:20px;color:#000;letter-spacing:0.19px;-webkit-text-stroke:0.2px #000;">3/8/2020</div>
<div class="t" style="left:231.6px;top:303.5px;font-size:13.5px;line-height:20px;color:#000;letter-spacing:-0.27px;-webkit-text-stroke:0.2px #000;">38.96972</div>
<div class="t" style="left:313.1px;top:303.5px;font-size:13.5px;line-height:20px;color:#000;letter-spacing:-0.34px;-webkit-text-stroke:0.2px #000;">-77.38519</div>
<div class="t" style="left:374.5px;top:303.5px;font-size:13.5px;line-height:20px;color:#000;letter-spacing:0.25px;-webkit-text-stroke:0.2px #000;">Herndon, VA</div>
<div class="t" style="left:508.5px;top:303.5px;font-size:13.5px;line-height:20px;color:#000;letter-spacing:0.25px;-webkit-text-stroke:0.2px #000;">Herndon, VA</div>
<div class="t" style="left:736.7px;top:303.5px;font-size:13.5px;line-height:20px;color:#000;letter-spacing:-0.28px;-webkit-text-stroke:0.2px #000;">29.9</div>
<div class="t" style="left:920.5px;top:303.5px;font-size:13.5px;line-height:20px;color:#000;letter-spacing:-0.36px;-webkit-text-stroke:0.2px #000;">60</div>
<div class="t" style="left:1013.0px;top:303.5px;font-size:13.5px;line-height:20px;color:#000;letter-spacing:-0.28px;-webkit-text-stroke:0.2px #000;">44.8</div>
<div class="t" style="left:1119.4px;top:303.5px;font-size:13.5px;line-height:20px;color:#000;letter-spacing:-0.29px;-webkit-text-stroke:0.2px #000;">5.8</div>
<div class="t" style="left:46.0px;top:323.5px;font-size:13.5px;line-height:20px;color:#000;letter-spacing:0.25px;-webkit-text-stroke:0.2px #000;">Herndon, VA</div>
<div class="t" style="left:158.2px;top:323.5px;font-size:13.5px;line-height:20px;color:#000;letter-spacing:0.19px;-webkit-text-stroke:0.2px #000;">3/9/2020</div>
<div class="t" style="left:231.6px;top:323.5px;font-size:13.5px;line-height:20px;color:#000;letter-spacing:-0.27px;-webkit-text-stroke:0.2px #000;">38.96972</div>
<div class="t" style="left:313.1px;top:323.5px;font-size:13.5px;line-height:20px;color:#000;letter-spacing:-0.34px;-webkit-text-stroke:0.2px #000;">-77.38519</div>
<div class="t" style="left:374.5px;top:323.5px;font-size:13.5px;line-height:20px;color:#000;letter-spacing:0.25px;-webkit-text-stroke:0.2px #000;">Herndon, VA</div>
<div class="t" style="left:508.5px;top:323.5px;font-size:13.5px;line-height:20px;color:#000;letter-spacing:0.25px;-webkit-text-stroke:0.2px #000;">Herndon, VA</div>
<div class="t" style="left:736.7px;top:323.5px;font-size:13.5px;line-height:20px;color:#000;letter-spacing:-0.28px;-webkit-text-stroke:0.2px #000;">40.9</div>
<div class="t" style="left:920.5px;top:323.5px;font-size:13.5px;line-height:20px;color:#000;letter-spacing:-0.36px;-webkit-text-stroke:0.2px #000;">65</div>
<div class="t" style="left:1013.0px;top:323.5px;font-size:13.5px;line-height:20px;color:#000;letter-spacing:-0.28px;-webkit-text-stroke:0.2px #000;">53.3</div>
<div class="t" style="left:1119.4px;top:323.5px;font-size:13.5px;line-height:20px;color:#000;letter-spacing:-0.29px;-webkit-text-stroke:0.2px #000;">6.2</div>
<div class="t" style="left:46.0px;top:343.5px;font-size:13.5px;line-height:20px;color:#000;letter-spacing:0.25px;-webkit-text-stroke:0.2px #000;">Herndon, VA</div>
<div class="t" style="left:150.9px;top:343.5px;font-size:13.5px;line-height:20px;color:#000;letter-spacing:0.14px;-webkit-text-stroke:0.2px #000;">3/10/2020</div>
<div class="t" style="left:231.6px;top:343.5px;font-size:13.5px;line-height:20px;color:#000;letter-spacing:-0.27px;-webkit-text-stroke:0.2px #000;">38.96972</div>
<div class="t" style="left:313.1px;top:343.5px;font-size:13.5px;line-height:20px;color:#000;letter-spacing:-0.34px;-webkit-text-stroke:0.2px #000;">-77.38519</div>
<div class="t" style="left:374.5px;top:343.5px;font-size:13.5px;line-height:20px;color:#000;letter-spacing:0.25px;-webkit-text-stroke:0.2px #000;">Herndon, VA</div>
<div class="t" style="left:508.5px;top:343.5px;font-size:13.5px;line-height:20px;color:#000;letter-spacing:0.25px;-webkit-text-stroke:0.2px #000;">Herndon, VA</div>
<div class="t" style="left:747.5px;top:343.5px;font-size:13.5px;line-height:20px;color:#000;letter-spacing:-0.36px;-webkit-text-stroke:0.2px #000;">51</div>
<div class="t" style="left:920.5px;top:343.5px;font-size:13.5px;line-height:20px;color:#000;letter-spacing:-0.36px;-webkit-text-stroke:0.2px #000;">62</div>
<div class="t" style="left:1013.0px;top:343.5px;font-size:13.5px;line-height:20px;color:#000;letter-spacing:-0.28px;-webkit-text-stroke:0.2px #000;">56.8</div>
<div class="t" style="left:1119.4px;top:343.5px;font-size:13.5px;line-height:20px;color:#000;letter-spacing:-0.29px;-webkit-text-stroke:0.2px #000;">8.4</div>
<div class="t" style="left:46.0px;top:363.5px;font-size:13.5px;line-height:20px;color:#000;letter-spacing:0.25px;-webkit-text-stroke:0.2px #000;">Herndon, VA</div>
<div class="t" style="left:150.9px;top:363.5px;font-size:13.5px;line-height:20px;color:#000;letter-spacing:0.25px;-webkit-text-stroke:0.2px #000;">3/11/2020</div>
<div class="t" style="left:231.6px;top:363.5px;font-size:13.5px;line-height:20px;color:#000;letter-spacing:-0.27px;-webkit-text-stroke:0.2px #000;">38.96972</div>
<div class="t" style="left:313.1px;top:363.5px;font-size:13.5px;line-height:20px;color:#000;letter-spacing:-0.34px;-webkit-text-stroke:0.2px #000;">-77.38519</div>
<div class="t" style="left:374.5px;top:363.5px;font-size:13.5px;line-height:20px;color:#000;letter-spacing:0.25px;-webkit-text-stroke:0.2px #000;">Herndon, VA</div>
<div class="t" style="left:508.5px;top:363.5px;font-size:13.5px;line-height:20px;color:#000;letter-spacing:0.25px;-webkit-text-stroke:0.2px #000;">Herndon, VA</div>
<div class="t" style="left:736.7px;top:363.5px;font-size:13.5px;line-height:20px;color:#000;letter-spacing:-0.28px;-webkit-text-stroke:0.2px #000;">47.9</div>
<div class="t" style="left:920.5px;top:363.5px;font-size:13.5px;line-height:20px;color:#000;letter-spacing:-0.36px;-webkit-text-stroke:0.2px #000;">60</div>
<div class="t" style="left:1013.0px;top:363.5px;font-size:13.5px;line-height:20px;color:#000;letter-spacing:-0.28px;-webkit-text-stroke:0.2px #000;">54.6</div>
<div class="t" style="left:1119.4px;top:363.5px;font-size:13.5px;line-height:20px;color:#000;letter-spacing:-0.29px;-webkit-text-stroke:0.2px #000;">4.9</div>
<div class="t" style="left:46.0px;top:383.5px;font-size:13.5px;line-height:20px;color:#000;letter-spacing:0.25px;-webkit-text-stroke:0.2px #000;">Herndon, VA</div>
<div class="t" style="left:150.9px;top:383.5px;font-size:13.5px;line-height:20px;color:#000;letter-spacing:0.14px;-webkit-text-stroke:0.2px #000;">3/12/2020</div>
<div class="t" style="left:231.6px;top:383.5px;font-size:13.5px;line-height:20px;color:#000;letter-spacing:-0.27px;-webkit-text-stroke:0.2px #000;">38.96972</div>
<div class="t" style="left:313.1px;top:383.5px;font-size:13.5px;line-height:20px;color:#000;letter-spacing:-0.34px;-webkit-text-stroke:0.2px #000;">-77.38519</div>
<div class="t" style="left:374.5px;top:383.5px;font-size:13.5px;line-height:20px;color:#000;letter-spacing:0.25px;-webkit-text-stroke:0.2px #000;">Herndon, VA</div>
<div class="t" style="left:508.5px;top:383.5px;font-size:13.5px;line-height:20px;color:#000;letter-spacing:0.25px;-webkit-text-stroke:0.2px #000;">Herndon, VA</div>
<div class="t" style="left:736.7px;top:383.5px;font-size:13.5px;line-height:20px;color:#000;letter-spacing:-0.28px;-webkit-text-stroke:0.2px #000;">45.9</div>
<div class="t" style="left:920.5px;top:383.5px;font-size:13.5px;line-height:20px;color:#000;letter-spacing:-0.36px;-webkit-text-stroke:0.2px #000;">56</div>
<div class="t" style="left:1013.0px;top:383.5px;font-size:13.5px;line-height:20px;color:#000;letter-spacing:-0.28px;-webkit-text-stroke:0.2px #000;">51.4</div>
<div class="t" style="left:1119.4px;top:383.5px;font-size:13.5px;line-height:20px;color:#000;letter-spacing:-0.29px;-webkit-text-stroke:0.2px #000;">6.7</div>
<div class="t" style="left:46.0px;top:403.5px;font-size:13.5px;line-height:20px;color:#000;letter-spacing:0.25px;-webkit-text-stroke:0.2px #000;">Herndon, VA</div>
<div class="t" style="left:150.9px;top:403.5px;font-size:13.5px;line-height:20px;color:#000;letter-spacing:0.14px;-webkit-text-stroke:0.2px #000;">3/13/2020</div>
<div class="t" style="left:231.6px;top:403.5px;font-size:13.5px;line-height:20px;color:#000;letter-spacing:-0.27px;-webkit-text-stroke:0.2px #000;">38.96972</div>
<div class="t" style="left:313.1px;top:403.5px;font-size:13.5px;line-height:20px;color:#000;letter-spacing:-0.34px;-webkit-text-stroke:0.2px #000;">-77.38519</div>
<div class="t" style="left:374.5px;top:403.5px;font-size:13.5px;line-height:20px;color:#000;letter-spacing:0.25px;-webkit-text-stroke:0.2px #000;">Herndon, VA</div>
<div class="t" style="left:508.5px;top:403.5px;font-size:13.5px;line-height:20px;color:#000;letter-spacing:0.25px;-webkit-text-stroke:0.2px #000;">Herndon, VA</div>
<div class="t" style="left:736.7px;top:403.5px;font-size:13.5px;line-height:20px;color:#000;letter-spacing:-0.28px;-webkit-text-stroke:0.2px #000;">40.5</div>
<div class="t" style="left:909.7px;top:403.5px;font-size:13.5px;line-height:20px;color:#000;letter-spacing:-0.28px;-webkit-text-stroke:0.2px #000;">55.7</div>
<div class="t" style="left:1013.0px;top:403.5px;font-size:13.5px;line-height:20px;color:#000;letter-spacing:-0.28px;-webkit-text-stroke:0.2px #000;">46.4</div>
<div class="t" style="left:1119.4px;top:403.5px;font-size:13.5px;line-height:20px;color:#000;letter-spacing:-0.29px;-webkit-text-stroke:0.2px #000;">7.2</div>
<div class="t" style="left:46.0px;top:423.5px;font-size:13.5px;line-height:20px;color:#000;letter-spacing:0.25px;-webkit-text-stroke:0.2px #000;">Herndon, VA</div>
<div class="t" style="left:150.9px;top:423.5px;font-size:13.5px;line-height:20px;color:#000;letter-spacing:0.14px;-webkit-text-stroke:0.2px #000;">3/14/2020</div>
<div class="t" style="left:231.6px;top:423.5px;font-size:13.5px;line-height:20px;color:#000;letter-spacing:-0.27px;-webkit-text-stroke:0.2px #000;">38.96972</div>
<div class="t" style="left:313.1px;top:423.5px;font-size:13.5px;line-height:20px;color:#000;letter-spacing:-0.34px;-webkit-text-stroke:0.2px #000;">-77.38519</div>
<div class="t" style="left:374.5px;top:423.5px;font-size:13.5px;line-height:20px;color:#000;letter-spacing:0.25px;-webkit-text-stroke:0.2px #000;">Herndon, VA</div>
<div class="t" style="left:508.5px;top:423.5px;font-size:13.5px;line-height:20px;color:#000;letter-spacing:0.25px;-webkit-text-stroke:0.2px #000;">Herndon, VA</div>
<div class="t" style="left:736.7px;top:423.5px;font-size:13.5px;line-height:20px;color:#000;letter-spacing:-0.28px;-webkit-text-stroke:0.2px #000;">33.7</div>
<div class="t" style="left:909.7px;top:423.5px;font-size:13.5px;line-height:20px;color:#000;letter-spacing:-0.28px;-webkit-text-stroke:0.2px #000;">53.7</div>
<div class="t" style="left:1013.0px;top:423.5px;font-size:13.5px;line-height:20px;color:#000;letter-spacing:-0.28px;-webkit-text-stroke:0.2px #000;">43.6</div>
<div class="t" style="left:1119.4px;top:423.5px;font-size:13.5px;line-height:20px;color:#000;letter-spacing:-0.29px;-webkit-text-stroke:0.2px #000;">7.9</div>
<div class="t" style="left:46.0px;top:443.5px;font-size:13.5px;line-height:20px;color:#000;letter-spacing:0.25px;-webkit-text-stroke:0.2px #000;">Herndon, VA</div>
<div class="t" style="left:150.9px;top:443.5px;font-size:13.5px;line-height:20px;color:#000;letter-spacing:0.14px;-webkit-text-stroke:0.2px #000;">3/15/2020</div>
<div class="t" style="left:231.6px;top:443.5px;font-size:13.5px;line-height:20px;color:#000;letter-spacing:-0.27px;-webkit-text-stroke:0.2px #000;">38.96972</div>
<div class="t" style="left:313.1px;top:443.5px;font-size:13.5px;line-height:20px;color:#000;letter-spacing:-0.34px;-webkit-text-stroke:0.2px #000;">-77.38519</div>
<div class="t" style="left:374.5px;top:443.5px;font-size:13.5px;line-height:20px;color:#000;letter-spacing:0.25px;-webkit-text-stroke:0.2px #000;">Herndon, VA</div>
<div class="t" style="left:508.5px;top:443.5px;font-size:13.5px;line-height:20px;color:#000;letter-spacing:0.25px;-webkit-text-stroke:0.2px #000;">Herndon, VA</div>
<div class="t" style="left:736.7px;top:443.5px;font-size:13.5px;line-height:20px;color:#000;letter-spacing:-0.28px;-webkit-text-stroke:0.2px #000;">43.8</div>
<div class="t" style="left:909.7px;top:443.5px;font-size:13.5px;line-height:20px;color:#000;letter-spacing:-0.28px;-webkit-text-stroke:0.2px #000;">61.6</div>
<div class="t" style="left:1013.0px;top:443.5px;font-size:13.5px;line-height:20px;color:#000;letter-spacing:-0.28px;-webkit-text-stroke:0.2px #000;">52.7</div>
<div class="t" style="left:1112.2px;top:443.5px;font-size:13.5px;line-height:20px;color:#000;letter-spacing:-0.28px;-webkit-text-stroke:0.2px #000;">10.7</div>
<div class="t" style="left:46.0px;top:463.5px;font-size:13.5px;line-height:20px;color:#000;letter-spacing:0.25px;-webkit-text-stroke:0.2px #000;">Herndon, VA</div>
<div class="t" style="left:150.9px;top:463.5px;font-size:13.5px;line-height:20px;color:#000;letter-spacing:0.14px;-webkit-text-stroke:0.2px #000;">3/16/2020</div>
<div class="t" style="left:231.6px;top:463.5px;font-size:13.5px;line-height:20px;color:#000;letter-spacing:-0.27px;-webkit-text-stroke:0.2px #000;">38.96972</div>
<div class="t" style="left:313.1px;top:463.5px;font-size:13.5px;line-height:20px;color:#000;letter-spacing:-0.34px;-webkit-text-stroke:0.2px #000;">-77.38519</div>
<div class="t" style="left:374.5px;top:463.5px;font-size:13.5px;line-height:20px;color:#000;letter-spacing:0.25px;-webkit-text-stroke:0.2px #000;">Herndon, VA</div>
<div class="t" style="left:508.5px;top:463.5px;font-size:13.5px;line-height:20px;color:#000;letter-spacing:0.25px;-webkit-text-stroke:0.2px #000;">Herndon, VA</div>
<div class="t" style="left:736.7px;top:463.5px;font-size:13.5px;line-height:20px;color:#000;letter-spacing:-0.28px;-webkit-text-stroke:0.2px #000;">42.5</div>
<div class="t" style="left:909.7px;top:463.5px;font-size:13.5px;line-height:20px;color:#000;letter-spacing:-0.28px;-webkit-text-stroke:0.2px #000;">54.4</div>
<div class="t" style="left:1013.0px;top:463.5px;font-size:13.5px;line-height:20px;color:#000;letter-spacing:-0.28px;-webkit-text-stroke:0.2px #000;">47.6</div>
<div class="t" style="left:1112.2px;top:463.5px;font-size:13.5px;line-height:20px;color:#000;letter-spacing:-0.28px;-webkit-text-stroke:0.2px #000;">10.3</div>
<div class="t" style="left:46.0px;top:483.5px;font-size:13.5px;line-height:20px;color:#000;letter-spacing:0.25px;-webkit-text-stroke:0.2px #000;">Herndon, VA</div>
<div class="t" style="left:150.9px;top:483.5px;font-size:13.5px;line-height:20px;color:#000;letter-spacing:0.14px;-webkit-text-stroke:0.2px #000;">3/17/2020</div>
<div class="t" style="left:231.6px;top:483.5px;font-size:13.5px;line-height:20px;color:#000;letter-spacing:-0.27px;-webkit-text-stroke:0.2px #000;">38.96972</div>
<div class="t" style="left:313.1px;top:483.5px;font-size:13.5px;line-height:20px;color:#000;letter-spacing:-0.34px;-webkit-text-stroke:0.2px #000;">-77.38519</div>
<div class="t" style="left:374.5px;top:483.5px;font-size:13.5px;line-height:20px;color:#000;letter-spacing:0.25px;-webkit-text-stroke:0.2px #000;">Herndon, VA</div>
<div class="t" style="left:508.5px;top:483.5px;font-size:13.5px;line-height:20px;color:#000;letter-spacing:0.25px;-webkit-text-stroke:0.2px #000;">Herndon, VA</div>
<div class="t" style="left:736.7px;top:483.5px;font-size:13.5px;line-height:20px;color:#000;letter-spacing:-0.28px;-webkit-text-stroke:0.2px #000;">40.2</div>
<div class="t" style="left:909.7px;top:483.5px;font-size:13.5px;line-height:20px;color:#000;letter-spacing:-0.28px;-webkit-text-stroke:0.2px #000;">47.7</div>
<div class="t" style="left:1013.0px;top:483.5px;font-size:13.5px;line-height:20px;color:#000;letter-spacing:-0.28px;-webkit-text-stroke:0.2px #000;">44.5</div>
<div class="t" style="left:1119.4px;top:483.5px;font-size:13.5px;line-height:20px;color:#000;letter-spacing:-0.29px;-webkit-text-stroke:0.2px #000;">6.7</div>
<div class="t" style="left:46.0px;top:503.5px;font-size:13.5px;line-height:20px;color:#000;letter-spacing:0.25px;-webkit-text-stroke:0.2px #000;">Herndon, VA</div>
<div class="t" style="left:150.9px;top:503.5px;font-size:13.5px;line-height:20px;color:#000;letter-spacing:0.14px;-webkit-text-stroke:0.2px #000;">3/18/2020</div>
<div class="t" style="left:231.6px;top:503.5px;font-size:13.5px;line-height:20px;color:#000;letter-spacing:-0.27px;-webkit-text-stroke:0.2px #000;">38.96972</div>
<div class="t" style="left:313.1px;top:503.5px;font-size:13.5px;line-height:20px;color:#000;letter-spacing:-0.34px;-webkit-text-stroke:0.2px #000;">-77.38519</div>
<div class="t" style="left:374.5px;top:503.5px;font-size:13.5px;line-height:20px;color:#000;letter-spacing:0.25px;-webkit-text-stroke:0.2px #000;">Herndon, VA</div>
<div class="t" style="left:508.5px;top:503.5px;font-size:13.5px;line-height:20px;color:#000;letter-spacing:0.25px;-webkit-text-stroke:0.2px #000;">Herndon, VA</div>
<div class="t" style="left:736.7px;top:503.5px;font-size:13.5px;line-height:20px;color:#000;letter-spacing:-0.28px;-webkit-text-stroke:0.2px #000;">47.2</div>
<div class="t" style="left:909.7px;top:503.5px;font-size:13.5px;line-height:20px;color:#000;letter-spacing:-0.28px;-webkit-text-stroke:0.2px #000;">70.6</div>
<div class="t" style="left:1013.0px;top:503.5px;font-size:13.5px;line-height:20px;color:#000;letter-spacing:-0.28px;-webkit-text-stroke:0.2px #000;">58.6</div>
<div class="t" style="left:1119.4px;top:503.5px;font-size:13.5px;line-height:20px;color:#000;letter-spacing:-0.29px;-webkit-text-stroke:0.2px #000;">9.5</div>
<div class="t" style="left:46.0px;top:523.5px;font-size:13.5px;line-height:20px;color:#000;letter-spacing:0.25px;-webkit-text-stroke:0.2px #000;">Herndon, VA</div>
<div class="t" style="left:150.9px;top:523.5px;font-size:13.5px;line-height:20px;color:#000;letter-spacing:0.14px;-webkit-text-stroke:0.2px #000;">3/19/2020</div>
<div class="t" style="left:231.6px;top:523.5px;font-size:13.5px;line-height:20px;color:#000;letter-spacing:-0.27px;-webkit-text-stroke:0.2px #000;">38.96972</div>
<div class="t" style="left:313.1px;top:523.5px;font-size:13.5px;line-height:20px;color:#000;letter-spacing:-0.34px;-webkit-text-stroke:0.2px #000;">-77.38519</div>
<div class="t" style="left:374.5px;top:523.5px;font-size:13.5px;line-height:20px;color:#000;letter-spacing:0.25px;-webkit-text-stroke:0.2px #000;">Herndon, VA</div>
<div class="t" style="left:508.5px;top:523.5px;font-size:13.5px;line-height:20px;color:#000;letter-spacing:0.25px;-webkit-text-stroke:0.2px #000;">Herndon, VA</div>
<div class="t" style="left:736.7px;top:523.5px;font-size:13.5px;line-height:20px;color:#000;letter-spacing:-0.28px;-webkit-text-stroke:0.2px #000;">50.8</div>
<div class="t" style="left:909.7px;top:523.5px;font-size:13.5px;line-height:20px;color:#000;letter-spacing:-0.28px;-webkit-text-stroke:0.2px #000;">65.4</div>
<div class="t" style="left:1023.8px;top:523.5px;font-size:13.5px;line-height:20px;color:#000;letter-spacing:-0.36px;-webkit-text-stroke:0.2px #000;">58</div>
<div class="t" style="left:1119.4px;top:523.5px;font-size:13.5px;line-height:20px;color:#000;letter-spacing:-0.29px;-webkit-text-stroke:0.2px #000;">5.5</div>
<div class="t" style="left:46.0px;top:543.5px;font-size:13.5px;line-height:20px;color:#000;letter-spacing:0.25px;-webkit-text-stroke:0.2px #000;">Herndon, VA</div>
<div class="t" style="left:150.9px;top:543.5px;font-size:13.5px;line-height:20px;color:#000;letter-spacing:0.14px;-webkit-text-stroke:0.2px #000;">3/20/2020</div>
<div class="t" style="left:231.6px;top:543.5px;font-size:13.5px;line-height:20px;color:#000;letter-spacing:-0.27px;-webkit-text-stroke:0.2px #000;">38.96972</div>
<div class="t" style="left:313.1px;top:543.5px;font-size:13.5px;line-height:20px;color:#000;letter-spacing:-0.34px;-webkit-text-stroke:0.2px #000;">-77.38519</div>
<div class="t" style="left:374.5px;top:543.5px;font-size:13.5px;line-height:20px;color:#000;letter-spacing:0.25px;-webkit-text-stroke:0.2px #000;">Herndon, VA</div>
<div class="t" style="left:508.5px;top:543.5px;font-size:13.5px;line-height:20px;color:#000;letter-spacing:0.25px;-webkit-text-stroke:0.2px #000;">Herndon, VA</div>
<div class="t" style="left:736.7px;top:543.5px;font-size:13.5px;line-height:20px;color:#000;letter-spacing:-0.28px;-webkit-text-stroke:0.2px #000;">49.2</div>
<div class="t" style="left:909.7px;top:543.5px;font-size:13.5px;line-height:20px;color:#000;letter-spacing:-0.28px;-webkit-text-stroke:0.2px #000;">51.5</div>
<div class="t" style="left:1013.0px;top:543.5px;font-size:13.5px;line-height:20px;color:#000;letter-spacing:-0.28px;-webkit-text-stroke:0.2px #000;">50.1</div>
<div class="t" style="left:1119.4px;top:543.5px;font-size:13.5px;line-height:20px;color:#000;letter-spacing:-0.29px;-webkit-text-stroke:0.2px #000;">8.2</div>
<div class="t" style="left:46.0px;top:563.5px;font-size:13.5px;line-height:20px;color:#000;letter-spacing:0.25px;-webkit-text-stroke:0.2px #000;">Herndon, VA</div>
<div class="t" style="left:150.9px;top:563.5px;font-size:13.5px;line-height:20px;color:#000;letter-spacing:0.14px;-webkit-text-stroke:0.2px #000;">3/21/2020</div>
<div class="t" style="left:231.6px;top:563.5px;font-size:13.5px;line-height:20px;color:#000;letter-spacing:-0.27px;-webkit-text-stroke:0.2px #000;">38.96972</div>
<div class="t" style="left:313.1px;top:563.5px;font-size:13.5px;line-height:20px;color:#000;letter-spacing:-0.34px;-webkit-text-stroke:0.2px #000;">-77.38519</div>
<div class="t" style="left:374.5px;top:563.5px;font-size:13.5px;line-height:20px;color:#000;letter-spacing:0.25px;-webkit-text-stroke:0.2px #000;">Herndon, VA</div>
<div class="t" style="left:508.5px;top:563.5px;font-size:13.5px;line-height:20px;color:#000;letter-spacing:0.25px;-webkit-text-stroke:0.2px #000;">Herndon, VA</div>
<div class="t" style="left:736.7px;top:563.5px;font-size:13.5px;line-height:20px;color:#000;letter-spacing:-0.28px;-webkit-text-stroke:0.2px #000;">52.8</div>
<div class="t" style="left:909.7px;top:563.5px;font-size:13.5px;line-height:20px;color:#000;letter-spacing:-0.28px;-webkit-text-stroke:0.2px #000;">75.8</div>
<div class="t" style="left:1013.0px;top:563.5px;font-size:13.5px;line-height:20px;color:#000;letter-spacing:-0.28px;-webkit-text-stroke:0.2px #000;">63.3</div>
<div class="t" style="left:1112.2px;top:563.5px;font-size:13.5px;line-height:20px;color:#000;letter-spacing:-0.28px;-webkit-text-stroke:0.2px #000;">10.3</div>
<div class="b" style="left:18px;top:953px;width:1121px;height:23px;background:#E6E6E6;border-top:1px solid #ABABAB;"></div>
<div class="b" style="left:20px;top:960px;width:773px;height:15px;background:#fff;border:1px solid #ABABAB;"></div>
<div class="b" style="left:793px;top:960px;width:346px;height:15px;background:#DADADA;"></div>
<div class="b" style="left:35px;top:961px;width:1px;height:13px;background:#D0D0D0;"></div>
<svg style="left:24px;top:963px" width="8" height="9"><path d="M6 0 L6 9 L0.5 4.5 Z" fill="#606060"/></svg>
<div class="b" style="left:128px;top:615px;width:584px;height:323px;background:#F0F0F0;border:1px solid #6D6D6D;box-shadow:4px 6px 22px rgba(0,0,0,0.40),0 0 3px rgba(0,0,0,0.2);"></div>
<div class="b" style="left:129px;top:616px;width:582px;height:30px;background:#fff;"></div>
<div class="t" style="left:136.4px;top:621.0px;font-size:12px;line-height:20px;color:#000;letter-spacing:-0.29px;">Select Data Source</div>
<div class="t" style="left:640.0px;top:621.0px;font-size:12.5px;line-height:20px;color:#000;letter-spacing:-0.95px;">?</div>
<svg style="left:683px;top:625px" width="10" height="10" viewBox="0 0 10 10"><path d="M0.300 0.300 L9.700 9.700 M9.700 0.300 L0.300 9.700" stroke="#111" stroke-width="1.100" fill="none"/></svg>
<div class="t" style="left:145.9px;top:654.5px;font-size:12px;line-height:20px;color:#000;letter-spacing:-0.22px;">Chart <u>d</u>ata range:</div>
<div class="b" style="left:246px;top:653px;width:449px;height:21px;background:#fff;border:1px solid #ABADB3;"></div>
<div class="b" style="left:250px;top:657px;width:220px;height:13px;background:#CCCCCC;"></div>
<div class="t" style="left:249.9px;top:654.5px;font-size:12px;line-height:20px;color:#000;letter-spacing:-0.46px;">=Weather!$B$1:$B$17,Weather!$G$1:$I$17</div>
<div class="b" style="left:469px;top:656px;width:1px;height:15px;background:#000;"></div>
<div class="b" style="left:673px;top:654px;width:21px;height:19px;background:#F7F7F7;border:2px solid #B2B2B2;"></div>
<svg style="left:677px;top:657px" width="12" height="13" viewBox="0 0 12 13"><path d="M6 1.200 L10.300 5.500 H7.100 V9 H4.900 V5.500 H1.700 Z" fill="#111"/><path d="M2 10.800 H10" stroke="#111" stroke-width="1.200"/></svg>
<div class="b" style="left:350px;top:707px;width:140px;height:24px;background:#E1E1E1;border:1px solid #ADADAD;"></div>
<svg style="left:357px;top:710px" width="18" height="18" viewBox="0 0 18 18">
      <rect x="1.5" y="2.5" width="15" height="13" fill="#fff" stroke="#444" stroke-width="1"/>
      <rect x="11.5" y="2.5" width="5" height="4.3" fill="#5BA3E6"/><rect x="1.5" y="11.2" width="5" height="4.3" fill="#5BA3E6"/>
      <path d="M6.500 2.500 V15.500 M11.500 2.500 V15.500 M1.500 6.800 H16.500 M1.500 11.200 H16.500" stroke="#444" stroke-width="0.900"/>
      <rect x="1.500" y="2.500" width="15" height="13" fill="none" stroke="#444" stroke-width="1"/>
      <rect x="0" y="0" width="10.500" height="10.200" fill="#E1E1E1"/>
      <g stroke="#222" stroke-width="1.100" fill="none"><path d="M3 9.500 V3.500 H9"/><path d="M0.800 7.300 L3 9.700 L5.200 7.300"/><path d="M7 1.200 L9.300 3.500 L7 5.800"/></g></svg>
<div class="t" style="left:377.0px;top:709.0px;font-size:12px;line-height:20px;color:#000;letter-spacing:-0.19px;">S<u>w</u>itch Row/Column</div>
<svg style="left:280px;top:700px" width="64" height="44" viewBox="0 0 64 44">
      <path d="M59.500 6.500 V15.500 H27 Q17.500 15.500 17.500 25 V30.500 H22.500 L12.500 39.500 L3 30.500 H8 V24 Q8 6.500 26 6.500 Z" fill="#D5D5D5" stroke="#B4B4B4" stroke-width="1"/></svg>
<svg style="left:496px;top:700px" width="64" height="44" viewBox="0 0 64 44">
      <path d="M4.500 6.500 V15.500 H37 Q46.500 15.500 46.500 25 V30.500 H41.500 L51.500 39.500 L61 30.500 H56 V24 Q56 6.500 38 6.500 Z" fill="#D5D5D5" stroke="#B4B4B4" stroke-width="1"/></svg>
<div class="t" style="left:135.9px;top:741.0px;font-size:12px;line-height:20px;color:#000;letter-spacing:-0.49px;">Legend Entries (<u>S</u>eries)</div>
<div class="t" style="left:426.9px;top:741.0px;font-size:12px;line-height:20px;color:#000;letter-spacing:-0.33px;">Horizontal (<u>C</u>ategory) Axis Labels</div>
<div class="b" style="left:135px;top:759px;width:283px;height:137px;background:#fff;border:1px solid #6E6E6E;"></div>
<div class="b" style="left:136px;top:760px;width:281px;height:27px;background:#F0F0F0;border-bottom:1px solid #6E6E6E;"></div>
<div class="b" style="left:137px;top:761px;width:73px;height:24px;background:#E1E1E1;border:1px solid #ADADAD;"></div>
<div class="b" style="left:212px;top:761px;width:73px;height:24px;background:#E1E1E1;border:1px solid #ADADAD;"></div>
<div class="b" style="left:287px;top:761px;width:76px;height:24px;background:#E1E1E1;border:1px solid #ADADAD;"></div>
<div class="b" style="left:365px;top:761px;width:24px;height:24px;background:#E1E1E1;border:1px solid #ADADAD;"></div>
<div class="b" style="left:391px;top:761px;width:24px;height:24px;background:#E1E1E1;border:1px solid #ADADAD;"></div>
<svg style="left:150px;top:763px" width="22" height="20" viewBox="0 0 22 20">
      <rect x="4.5" y="4.5" width="15" height="13" fill="#fff" stroke="#444" stroke-width="1"/><path d="M4.500 8.800 H19.500 M4.500 13.100 H19.500 M9.500 4.500 V17.500 M14.500 4.500 V17.500" stroke="#444" stroke-width="0.9"/>
      <rect x="2" y="1" width="8" height="8" fill="#E1E1E1"/><path d="M6.500 2 V9 M3 5.500 H10" stroke="#2E8B3D" stroke-width="1.300"/></svg>
<div class="t" style="left:171.9px;top:763.0px;font-size:12px;line-height:20px;color:#000;letter-spacing:0.12px;"><u>A</u>dd</div>
<svg style="left:227px;top:764px" width="20" height="18" viewBox="0 0 20 18">
      <rect x="1.5" y="1.5" width="15" height="14.500" fill="#fff" stroke="#3C3C3C" stroke-width="1"/><rect x="2" y="2" width="14" height="2.600" fill="#C8C8C8"/>
      <path d="M1.500 5 H16.500 M2 8.700 H16 M2 12.300 H16 M6.500 5 V16 M11.500 5 V16" stroke="#4A4A4A" stroke-width="0.900"/>
      <path d="M7.300 17.300 L8.300 13.600 L15 6.600 Q16.100 5.500 17.300 6.700 Q18.400 7.900 17.300 9 L10.700 16.200 Z" fill="#2B7CD3" stroke="#F4F4F4" stroke-width="0.900"/><path d="M9 14.300 L10.200 15.500" stroke="#fff" stroke-width="0.700"/></svg>
<div class="t" style="left:246.9px;top:763.0px;font-size:12px;line-height:20px;color:#000;letter-spacing:-0.12px;"><u>E</u>dit</div>
<svg style="left:296px;top:766px" width="14" height="14" viewBox="0 0 14 14"><path d="M1 1 L13 13 M13 1 L1 13" stroke="#E8413F" stroke-width="1.300" fill="none"/></svg>
<div class="t" style="left:313.4px;top:763.0px;font-size:12px;line-height:20px;color:#000;letter-spacing:-0.66px;"><u>R</u>emove</div>
<svg style="left:371px;top:768px" width="12" height="8" viewBox="0 0 12 8"><path d="M1 7 L6 1.500 L11 7" stroke="#C2C2C2" stroke-width="1.300" fill="none"/></svg>
<svg style="left:397px;top:769px" width="12" height="8" viewBox="0 0 12 8"><path d="M1 1 L6 6.500 L11 1" stroke="#2B7CD3" stroke-width="1.400" fill="none"/></svg>
<div class="b" style="left:136px;top:790px;width:281px;height:21px;background:#DEDEDE;"></div>
<svg style="left:138px;top:794px" width="13" height="13" viewBox="0 0 13 13"><rect x="0.5" y="0.5" width="12" height="12" fill="#fff" stroke="#333" stroke-width="1"/><path d="M2.800 6.500 L5.300 9.200 L10.300 3.500" stroke="#333" stroke-width="1.100" fill="none"/></svg>
<div class="t" style="left:172.4px;top:791.0px;font-size:12px;line-height:20px;color:#000;letter-spacing:-0.10px;">Minimum Temperature</div>
<svg style="left:138px;top:815px" width="13" height="13" viewBox="0 0 13 13"><rect x="0.5" y="0.5" width="12" height="12" fill="#fff" stroke="#333" stroke-width="1"/><path d="M2.800 6.500 L5.300 9.200 L10.300 3.500" stroke="#333" stroke-width="1.100" fill="none"/></svg>
<div class="t" style="left:172.4px;top:812.0px;font-size:12px;line-height:20px;color:#000;letter-spacing:-0.23px;">Maximum Temperature</div>
<svg style="left:138px;top:836px" width="13" height="13" viewBox="0 0 13 13"><rect x="0.5" y="0.5" width="12" height="12" fill="#fff" stroke="#333" stroke-width="1"/><path d="M2.800 6.500 L5.300 9.200 L10.300 3.500" stroke="#333" stroke-width="1.100" fill="none"/></svg>
<div class="t" style="left:172.4px;top:833.0px;font-size:12px;line-height:20px;color:#000;letter-spacing:-0.11px;">Temperature</div>
<div class="b" style="left:426px;top:759px;width:280px;height:137px;background:#fff;border:1px solid #6E6E6E;"></div>
<div class="b" style="left:427px;top:760px;width:278px;height:27px;background:#fff;border-bottom:1px solid #6E6E6E;"></div>
<div class="b" style="left:428px;top:761px;width:73px;height:24px;background:#E1E1E1;border:1px solid #ADADAD;"></div>
<svg style="left:443px;top:764px" width="20" height="18" viewBox="0 0 20 18">
      <rect x="1.5" y="1.5" width="15" height="14.500" fill="#fff" stroke="#3C3C3C" stroke-width="1"/><rect x="2" y="2" width="14" height="2.600" fill="#C8C8C8"/>
      <path d="M1.500 5 H16.500 M2 8.700 H16 M2 12.300 H16 M6.500 5 V16 M11.500 5 V16" stroke="#4A4A4A" stroke-width="0.900"/>
      <path d="M7.300 17.300 L8.300 13.600 L15 6.600 Q16.100 5.500 17.300 6.700 Q18.400 7.900 17.300 9 L10.700 16.200 Z" fill="#2B7CD3" stroke="#F4F4F4" stroke-width="0.900"/><path d="M9 14.300 L10.200 15.500" stroke="#fff" stroke-width="0.700"/></svg>
<div class="t" style="left:462.4px;top:763.0px;font-size:12px;line-height:20px;color:#000;letter-spacing:0.13px;">Edi<u>t</u></div>
<svg style="left:429px;top:791px" width="13" height="13" viewBox="0 0 13 13"><rect x="0.5" y="0.5" width="12" height="12" fill="#fff" stroke="#333" stroke-width="1"/><path d="M2.800 6.500 L5.300 9.200 L10.300 3.500" stroke="#333" stroke-width="1.100" fill="none"/></svg>
<div class="t" style="left:463.4px;top:788.0px;font-size:12px;line-height:20px;color:#000;letter-spacing:-0.13px;">3/6/2020</div>
<svg style="left:429px;top:812px" width="13" height="13" viewBox="0 0 13 13"><rect x="0.5" y="0.5" width="12" height="12" fill="#fff" stroke="#333" stroke-width="1"/><path d="M2.800 6.500 L5.300 9.200 L10.300 3.500" stroke="#333" stroke-width="1.100" fill="none"/></svg>
<div class="t" style="left:463.4px;top:809.0px;font-size:12px;line-height:20px;color:#000;letter-spacing:-0.13px;">3/7/2020</div>
<svg style="left:429px;top:833px" width="13" height="13" viewBox="0 0 13 13"><rect x="0.5" y="0.5" width="12" height="12" fill="#fff" stroke="#333" stroke-width="1"/><path d="M2.800 6.500 L5.300 9.200 L10.300 3.500" stroke="#333" stroke-width="1.100" fill="none"/></svg>
<div class="t" style="left:463.4px;top:830.0px;font-size:12px;line-height:20px;color:#000;letter-spacing:-0.13px;">3/8/2020</div>
<svg style="left:429px;top:854px" width="13" height="13" viewBox="0 0 13 13"><rect x="0.5" y="0.5" width="12" height="12" fill="#fff" stroke="#333" stroke-width="1"/><path d="M2.800 6.500 L5.300 9.200 L10.300 3.500" stroke="#333" stroke-width="1.100" fill="none"/></svg>
<div class="t" style="left:463.4px;top:851.0px;font-size:12px;line-height:20px;color:#000;letter-spacing:-0.13px;">3/9/2020</div>
<svg style="left:429px;top:875px" width="13" height="13" viewBox="0 0 13 13"><rect x="0.5" y="0.5" width="12" height="12" fill="#fff" stroke="#333" stroke-width="1"/><path d="M2.800 6.500 L5.300 9.200 L10.300 3.500" stroke="#333" stroke-width="1.100" fill="none"/></svg>
<div class="t" style="left:463.4px;top:872.0px;font-size:12px;line-height:20px;color:#000;letter-spacing:-0.19px;">3/10/2020</div>
<div class="b" style="left:688px;top:788px;width:16px;height:107px;background:#F0F0F0;"></div>
<div class="b" style="left:688px;top:804px;width:16px;height:22px;background:#CDCDCD;"></div>
<svg style="left:690px;top:792px" width="11" height="8" viewBox="0 0 11 8"><path d="M1.500 6 L5.500 2 L9.500 6" stroke="#505050" stroke-width="1.500" fill="none"/></svg>
<svg style="left:690px;top:880px" width="11" height="8" viewBox="0 0 11 8"><path d="M1.500 2 L5.500 6 L9.500 2" stroke="#505050" stroke-width="1.500" fill="none"/></svg>
<div class="b" style="left:136px;top:908px;width:140px;height:21px;background:#E1E1E1;border:1px solid #ADADAD;"></div>
<div class="t" style="left:144.9px;top:908.5px;font-size:12px;line-height:20px;color:#000;letter-spacing:-0.30px;"><u>H</u>idden and Empty Cells</div>
<div class="b" style="left:547px;top:908px;width:73px;height:21px;background:#E1E1E1;border:2px solid #0078D7;"></div>
<div class="t" style="left:575.9px;top:908.5px;font-size:12px;line-height:20px;color:#000;letter-spacing:-0.82px;">OK</div>
<div class="b" style="left:631px;top:908px;width:73px;height:21px;background:#E1E1E1;border:1px solid #ADADAD;"></div>
<div class="t" style="left:649.4px;top:908.5px;font-size:12px;line-height:20px;color:#000;letter-spacing:-0.36px;">Cancel</div>
<svg style="left:0;top:0" width="1139" height="976" viewBox="0 0 1139 976">
      <g fill="none" stroke-width="2">
       <path d="M130 263 V243.500 H213 V263" stroke="#fff"/>
       <path d="M130 263 V243.500 H213 V263" stroke="#217346" stroke-dasharray="6 2"/>
       <path d="M130 263 V583" stroke="#fff"/><path d="M130 263 V583" stroke="#217346" stroke-dasharray="6 2"/>
       <path d="M213 263 V583" stroke="#fff" stroke-width="1.500"/><path d="M213 263 V583" stroke="#217346" stroke-width="1.500" stroke-dasharray="6 2"/>
       <path d="M593 243 V583" stroke="#fff"/><path d="M593 243 V583" stroke="#217346" stroke-dasharray="6 2"/>
       <path d="M1040 243 V583" stroke="#fff"/><path d="M1040 243 V583" stroke="#217346" stroke-dasharray="6 2"/>
       <path d="M593 244 H1040" stroke="#fff"/><path d="M593 244 H1040" stroke="#217346" stroke-dasharray="6 2"/>
       <rect x="593" y="243" width="171" height="20" stroke="#217346" stroke-width="2" />
       <path d="M595 261.500 H762" stroke="#fff" stroke-width="1"/>
      </g>
      <rect x="760" y="259.500" width="6" height="6" fill="#217346" stroke="#fff" stroke-width="1"/>
    </svg>
<div class="b" style="left:41px;top:236px;width:1005px;height:348px;border:3px solid #F63D44;"></div>
<div class="b" style="left:127px;top:263px;width:89px;height:320px;border:3px solid #5B2C91;"></div>
<svg style="left:0;top:0;filter:drop-shadow(2.5px 3.5px 3px rgba(0,0,0,0.42));" width="1139" height="976" viewBox="0 0 1139 976"><path d="M531.5 173.8 L601.9 124.5 L607.4 132.1 L622.5 103.1 L590.2 108.2 L595.6 115.8 L526.5 166.8 A4.3 4.3 0 0 0 531.5 173.8 Z" fill="#F6434A"/><path d="M291.1 668.0 L258.4 726.3 L250.2 721.9 L249.3 754.6 L276.1 735.9 L267.9 731.5 L298.7 672.0 A4.3 4.3 0 0 0 291.1 668.0 Z" fill="#F6434A"/><path d="M541.4 673.0 L501.1 739.7 L493.1 735.0 L491.0 767.6 L518.4 749.8 L510.4 745.1 L548.8 677.4 A4.3 4.3 0 0 0 541.4 673.0 Z" fill="#5E2B8E"/></svg>
<div class="b" style="left:458.1px;top:152.0px;width:41px;height:41px;border-radius:50%;background:#F6434A;box-shadow:2px 5px 7px rgba(0,0,0,0.38);"></div>
<div class="t" style="left:458.1px;top:151.5px;width:41px;height:41px;line-height:41px;text-align:center;color:#fff;font-size:30px;-webkit-text-stroke:0.3px #fff;transform:scaleY(1.06);">1</div>
<div class="b" style="left:284.1px;top:606.7px;width:41px;height:41px;border-radius:50%;background:#F6434A;box-shadow:2px 5px 7px rgba(0,0,0,0.38);"></div>
<div class="t" style="left:284.1px;top:606.2px;width:41px;height:41px;line-height:41px;text-align:center;color:#fff;font-size:30px;-webkit-text-stroke:0.3px #fff;transform:scaleY(1.06);">2</div>
<div class="b" style="left:546.0px;top:623.7px;width:41px;height:41px;border-radius:50%;background:#F6434A;box-shadow:2px 5px 7px rgba(0,0,0,0.38);"></div>
<div class="t" style="left:546.0px;top:623.2px;width:41px;height:41px;line-height:41px;text-align:center;color:#fff;font-size:30px;-webkit-text-stroke:0.3px #fff;transform:scaleY(1.06);">3</div>
<div class="b" style="left:470px;top:180px;width:7px;height:6px;background:#F6434A;"></div>
<div class="b" style="left:481px;top:180px;width:7px;height:6px;background:#F6434A;"></div>
</body></html>
